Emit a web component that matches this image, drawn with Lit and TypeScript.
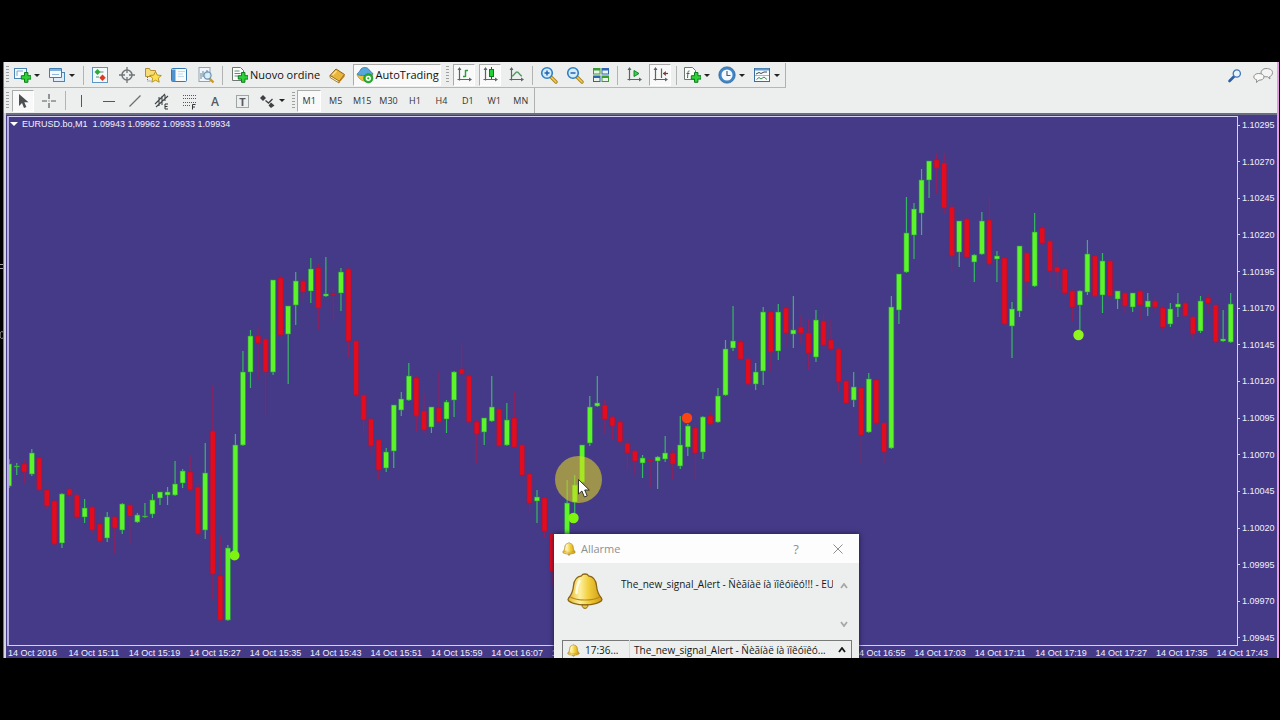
import { LitElement, html, svg, css, nothing } from "lit";
import { customElement } from "lit/decorators.js";
import { classMap } from "lit/directives/class-map.js";

type Art = ReturnType<typeof svg>;

const plus = svg`<path d="M11.500 6.500h3.400v3.200h3.200v3.400h-3.200v3.200h-3.400v-3.200H8.300v-3.400h3.200z" fill="#2fd038" stroke="#0b7d1c" stroke-width="1"/>`;
const axes = svg`<path d="M4.500 2.500v12M2.500 13.500h13" fill="none" stroke="#5d6366" stroke-width="1.200"/><path d="M4.500 1l-2 3h4zM17 13.500l-3-2v4z" fill="#5d6366"/>`;
const bell = svg`<path d="M18 2c2 0 3 .8 3.500 1.800 5 .7 7.500 4.700 8 10 .5 6 1.500 8.500 5 12.500 1.500 2-.5 3.700-5 5-7 2-16 2-23 0-4.500-1.300-6.500-3-5-5 3.500-4 4.500-6.500 5-12.500.5-5.300 3-9.300 8-10C15 2.800 16 2 18 2z" fill="url(#brass)" stroke="#8a6512" stroke-width="1.300"/><path d="M3.500 25c6 4 23 4 29 0" fill="none" stroke="#b88a16" stroke-width="1.200"/><path d="M12.500 9c-2.500 4-2.500 8-3 12" fill="none" stroke="#fffbe0" stroke-width="2.500" stroke-linecap="round"/><path d="M15 33c0 4.500 6 4.500 6 0z" fill="#e9c84b" stroke="#8a6512"/>`;
const brass = svg`<defs><linearGradient id="brass"><stop offset="0" stop-color="#e6b52a"/><stop offset=".35" stop-color="#fdf0a0"/><stop offset=".6" stop-color="#f2cf3e"/><stop offset="1" stop-color="#cf9a12"/></linearGradient></defs>`;
const lens = svg`<path d="M11 11l5 5" stroke="#a8811f" stroke-width="3.400" stroke-linecap="round"/><path d="M11 11l5 5" stroke="#f0cf5a" stroke-width="1.600" stroke-linecap="round"/><circle cx="7" cy="7" r="5.300" fill="#d5ecfb" stroke="#2f7fc4" stroke-width="1.600"/>`;

const icons: Record<string, Art> = {
  newChart: svg`<rect x="1.500" y="2.500" width="12" height="10" fill="#f4faff" stroke="#4a84b4"/><path d="M4 5v5M4 5h6" stroke="#7aa7c9" fill="none"/>${plus}`,
  profiles: svg`<rect x="5.500" y="6.500" width="11" height="9" fill="#dfeefa" stroke="#4a84b4"/><path d="M1.500 2.500h12v9h-12z" fill="#f4faff" stroke="#3f7db1"/><path d="M2 4h11" stroke="#7fb0d8" stroke-width="2"/><path d="M4 8.500h7" stroke="#8fb8d8"/>`,
  market: svg`<rect x="1.500" y="1.500" width="15" height="15" fill="#f3faff" stroke="#5b95c4"/><path d="M6.500 3l3 3-3 3-3-3z" fill="#2ea838"/><path d="M11.500 8.500l3.200 3.200-3.200 3.200-3.200-3.200z" fill="#e0391f"/><path d="M9 6h3.500M5 11h3" stroke="#57955e" stroke-width="1.200"/>`,
  target: svg`<circle cx="9" cy="9" r="5" fill="none" stroke="#70767a" stroke-width="1.500"/><path d="M9 1v6M9 11v6M1 9h6M11 9h6" stroke="#70767a" stroke-width="1.300"/>`,
  folderStar: svg`<path d="M1.500 2.500h4l1 2h5v6h-10z" fill="#f6dc77" stroke="#b5902f"/><path d="M3.500 11v4h3" fill="none" stroke="#6f6f6f" stroke-dasharray="1 1"/><path d="M11.500 5.500l1.800 3.600 4 .4-3 2.700.9 4-3.700-2-3.700 2 .9-4-3-2.700 4-.4z" fill="#ffdf4d" stroke="#b08a1e" stroke-width=".9"/>`,
  navigator: svg`<rect x="1.500" y="2.500" width="15" height="13" rx="1" fill="#f8fcff" stroke="#3478b4"/><path d="M2 3.500h3.500v12H2z" fill="#4f93cc"/><path d="M8 5.500h7M8 8h5M8 10.500h6" stroke="#bed5e8" stroke-width=".9"/>`,
  tester: svg`<rect x="2" y="1.500" width="11" height="14" fill="#f0f6fa" stroke="#8fa5b5"/><path d="M4 13v-6M6 11V5M8 12V7M10 8V4" stroke="#6b8292"/><path d="M12 12l4.500 4.500" stroke="#c99a2b" stroke-width="2.400"/><circle cx="10.500" cy="9.500" r="3.600" fill="#d7edfacc" stroke="#6a93b3" stroke-width="1.200"/>`,
  order: svg`<path d="M2.500 1.500h8l3 3v10h-11z" fill="#fbfdfb" stroke="#6d776f"/><path d="M4.500 5h5M4.500 7.500h6M4.500 10h4" stroke="#6a8a6c"/>${plus}`,
  book: svg`<path d="M2 9.500L8 3l8.500 5.500-5.500 7z" fill="#e9b63b" stroke="#8f6212"/><path d="M2 9.500v2l9 5.500v-2z" fill="#fff3cf" stroke="#8f6212" stroke-width=".8"/><path d="M11 15.500l5.500-7v2L11 17z" fill="#b77c15"/><path d="M4.500 9L8.500 5" stroke="#fbe39a" stroke-width="1.500"/>`,
  robot: svg`<path d="M1 8.500c2-1 14-1 16 0-1 3.500-3 6-6 6.500-5 1-9-3-10-6.500z" fill="#e9c13f" stroke="#b58b1e" stroke-width=".7"/><path d="M1.500 7.500C3 6 4 5 5 3c1.500-2 6-2 7.500 0 1 1.500 2 2.500 4 4 1 1.500-1 2.500-7 2.500s-9-.5-8-2z" fill="#57a7dc" stroke="#2b76ad" stroke-width=".8"/><circle cx="12.300" cy="12.300" r="4.600" fill="#22b52d" stroke="#128a1c" stroke-width=".7"/><circle cx="12.300" cy="12.300" r="1.900" fill="none" stroke="#fff" stroke-width="1.500"/>`,
  bars: svg`${axes}<path d="M10.500 4v7M10.500 4.500h2.500M8 10.500h2.500" stroke="#2c9b3c" stroke-width="1.400" fill="none"/>`,
  candles: svg`${axes}<path d="M10.500 1v12" stroke="#0d6e1c"/><rect x="8.500" y="3.500" width="4" height="7" fill="#1fd133" stroke="#0d7e1c"/>`,
  line: svg`${axes}<path d="M5 10c2 0 3-4 5-4 2 0 3 4 5 4" stroke="#5a9c64" stroke-width="1.300" fill="none"/>`,
  zoomIn: svg`${lens}<path d="M7 4.500v5M4.500 7h5" stroke="#1f65ad" stroke-width="1.500"/>`,
  zoomOut: svg`${lens}<path d="M4.500 7h5" stroke="#1f65ad" stroke-width="1.500"/>`,
  tile: svg`<path d="M1 2h7.500v6.500H1zM9.500 9.500H17V16H9.500z" fill="#3a9c2e"/><path d="M9.500 2H17v6.500H9.500zM1 9.500h7.500V16H1z" fill="#2f64b4"/><path d="M2 4.500h5.500v3H2zM10.500 4.500H16v3h-5.500zM2 12h5.500v3H2zM10.500 12H16v3h-5.500z" fill="#e9f5ea"/>`,
  scroll: svg`${axes}<path d="M9 4.500v6l5-3z" fill="#3ecb50" stroke="#128a26"/>`,
  shift: svg`${axes}<path d="M10.500 2.500v9.500" stroke="#5d6366" stroke-width="1.200"/><path d="M12 7.500h5" stroke="#7b3c34" stroke-width="1.200"/><path d="M14.800 5v5L12 7.500z" fill="#7b3c34"/>`,
  indicator: svg`<path d="M1.500 1.500h8l3 3v9h-11z" fill="#fbfdfb" stroke="#6d776f"/><path d="M6.500 5c-2-.5-1.500 2-2 7M3.500 7.500h3" fill="none" stroke="#4f5a52"/>${plus}`,
  clock: svg`<circle cx="9" cy="9" r="6.800" fill="#f3f9ff" stroke="#3f86c8" stroke-width="2.600"/><circle cx="9" cy="9" r="8.200" fill="none" stroke="#1d568f" stroke-width=".7"/><path d="M9 5v4.500h3.500" fill="none" stroke="#47617a" stroke-width="1.200"/>`,
  template: svg`<rect x="1.500" y="2.500" width="15" height="13" fill="#f8fcff" stroke="#37709f"/><path d="M2 3.500h14" stroke="#5d9bce" stroke-width="2"/><path d="M3 8l3-1.500 2 1 3-1.500h3" fill="none" stroke="#444"/><path d="M2 9.500h14" stroke="#84aac6" stroke-width=".8"/><path d="M3.500 13.500l2.500-2 2 1.500 3-2 3 2.500" fill="none" stroke="#388d43"/>`,
  search: svg`<path d="M8 9.500l-4.500 4.500" stroke="#2d5fa6" stroke-width="2.600" stroke-linecap="round"/><circle cx="10.800" cy="6.500" r="3.600" fill="#eaf4fd" stroke="#3e74b8" stroke-width="1.300"/>`,
  chat: svg`<path d="M13 1.500c4 0 6.500 1.500 6.500 4S18 9.300 16.500 9.600L17 12l-2.500-2.200C10 10 8 8.500 8 6s2-4.500 5-4.500z" fill="#f3f4f3" stroke="#8b8f8d"/><path d="M5.500 6.500c3.500 0 5.500 1.300 5.500 3.400s-2 3.300-5 3.300L3.500 15.500l.2-2.700C2 12.300.8 11.400.8 10c0-2 2-3.500 4.700-3.500z" fill="#f8f8f7" stroke="#8b8f8d"/>`,
  cursor: svg`<path d="M5 2v12l3-3 2 5 2.400-1-2.100-4.800H14.500z" fill="#4b4f52"/>`,
  cross: svg`<path d="M9 2v5M9 11v5M2 9h5M11 9h5" stroke="#53585b" stroke-width="1.200"/><path d="M8.500 9h1" stroke="#53585b"/>`,
  vline: svg`<path d="M8.500 3v12" stroke="#53585b"/>`,
  hline: svg`<path d="M3 9.500h12" stroke="#53585b"/>`,
  trend: svg`<path d="M3.500 14.500l11-11" stroke="#6a6f72" stroke-width="1.200"/>`,
  channel: svg`<path d="M2 12L12 2M3 15L15 4M6 5v9M9 4v9M12 3v6" stroke="#43474a" stroke-width="1.100"/><path d="M15 12h-3v5h3M12 14.500h2.500" fill="none" stroke="#33373a"/>`,
  fib: svg`<path d="M3 3.500h13M3 6.500h13M3 10.500h13M3 13.500h7" stroke="#53585b" stroke-dasharray="1 1" stroke-width="1.200"/><path d="M15.500 12.500h-3v5M12.500 15h2.500" fill="none" stroke="#33373a"/>`,
  textA: svg`<text x="9" y="13.500" text-anchor="middle" font-size="12" font-weight="600" font-family="Open Sans" fill="#55595c">A</text>`,
  textT: svg`<rect x="3.500" y="3.500" width="12" height="12" fill="none" stroke="#53585b" stroke-dasharray="1 1"/><text x="9.500" y="14" text-anchor="middle" font-size="11" font-weight="700" font-family="Open Sans" fill="#55595c">T</text>`,
  shapes: svg`<path d="M5 3l3 3-3 3-3-3z" fill="#3d4144"/><path d="M7.500 8.500l3 2.500 4-4" fill="none" stroke="#3d4144" stroke-width="1.300"/><path d="M13 10.500l3.500 3-3.500 2.500-2.500-2.500z" fill="#3d4144"/>`,
};

type Candle = [string, number, number, number, number];
const candles: (Candle | null)[] = [
  ["u", 459, 464, 486, 487], ["u", 463, 466, 467, 474], ["d", 459, 464, 472, 482], ["u", 449, 453, 474, 475],
  ["d", 457, 458, 490, 490], ["d", 490, 490, 506, 508], ["d", 500, 501, 544, 545], ["u", 493, 494, 543, 547],
  ["d", 488, 489, 495, 508], ["d", 493, 495, 517, 519], ["u", 499, 508, 517, 522], ["d", 505, 507, 530, 532],
  ["d", 513, 524, 541, 545], ["u", 512, 517, 538, 541], ["d", 516, 517, 528, 553], ["u", 503, 504, 530, 533],
  ["d", 504, 505, 516, 542], ["u", 513, 515, 522, 522], ["u", 503, 516, 517, 517], ["u", 494, 500, 514, 517],
  ["u", 492, 492, 498, 504], ["u", 487, 492, 495, 504], ["u", 461, 484, 495, 495], ["u", 469, 471, 483, 487],
  ["d", 455, 472, 490, 491], ["d", 483, 487, 534, 536], ["u", 443, 473, 530, 538], ["d", 385, 431, 574, 599],
  ["d", 536, 576, 620, 621], ["u", 545, 548, 620, 620], ["u", 434, 445, 552, 552], ["u", 351, 372, 445, 445],
  ["u", 330, 336, 372, 387], ["d", 327, 336, 343, 379], ["d", 337, 339, 372, 415], ["u", 280, 280, 372, 374],
  ["d", 276, 278, 335, 336], ["u", 306, 306, 334, 383], ["u", 272, 281, 305, 324], ["d", 278, 281, 292, 301],
  ["u", 258, 269, 291, 302], ["d", 264, 268, 308, 328], ["u", 257, 294, 296, 296], ["d", 288, 294, 295, 320],
  ["u", 268, 272, 293, 310], ["d", 268, 269, 341, 356], ["d", 339, 341, 395, 397], ["d", 393, 395, 420, 432],
  ["d", 417, 419, 446, 453], ["d", 439, 440, 470, 479], ["u", 448, 452, 468, 471], ["u", 405, 405, 451, 467],
  ["u", 392, 399, 410, 415], ["u", 363, 376, 400, 400], ["d", 376, 378, 416, 431], ["d", 393, 411, 430, 432],
  ["u", 407, 407, 427, 432], ["d", 372, 408, 422, 423], ["u", 400, 402, 419, 432], ["u", 371, 372, 400, 416],
  ["d", 343, 369, 374, 374], ["d", 374, 376, 422, 423], ["d", 420, 422, 434, 463], ["u", 418, 418, 432, 444],
  ["u", 376, 407, 421, 421], ["d", 408, 409, 446, 446], ["u", 403, 420, 445, 445], ["d", 391, 418, 447, 447],
  ["d", 443, 445, 475, 476], ["d", 473, 474, 503, 513], ["u", 490, 497, 501, 522], ["d", 497, 498, 531, 536],
  ["d", 534, 534, 571, 585], null, ["u", 480, 503, 580, 584], ["u", 475, 485, 502, 512],
  ["u", 445, 445, 482, 482], ["u", 396, 407, 443, 445], ["u", 376, 403, 406, 406], ["d", 399, 405, 419, 433],
  ["d", 415, 417, 426, 438], ["d", 420, 422, 442, 444], ["d", 439, 443, 453, 468], ["d", 449, 451, 461, 475],
  ["u", 455, 458, 463, 477], ["d", 459, 460, 461, 487], ["u", 456, 457, 461, 488], ["u", 436, 453, 459, 461],
  ["d", 450, 453, 464, 478], ["u", 416, 445, 466, 468], ["u", 424, 426, 447, 455], ["d", 423, 428, 453, 478],
  ["u", 416, 417, 452, 458], ["d", 412, 416, 424, 424], ["u", 388, 396, 422, 422], ["u", 340, 349, 395, 395],
  ["u", 306, 341, 348, 350], ["d", 339, 342, 359, 359], ["d", 357, 359, 384, 384], ["u", 363, 372, 384, 389],
  ["u", 307, 312, 371, 384], ["d", 311, 312, 352, 371], ["u", 304, 312, 351, 359], ["d", 306, 308, 333, 346],
  ["u", 296, 330, 334, 347], ["d", 315, 327, 333, 342], ["d", 319, 333, 353, 369], ["u", 310, 320, 357, 361],
  ["d", 314, 321, 345, 347], ["d", 320, 340, 349, 350], ["d", 348, 349, 382, 390], ["d", 379, 381, 403, 403],
  ["u", 372, 387, 400, 406], ["d", 387, 388, 435, 463], ["u", 373, 379, 432, 432], ["d", 379, 380, 423, 424],
  ["d", 422, 423, 452, 463], ["u", 296, 307, 448, 448], ["u", 274, 274, 310, 323], ["u", 197, 233, 272, 272],
  ["u", 203, 209, 235, 258], ["u", 169, 180, 213, 234], ["u", 161, 161, 180, 197], ["d", 153, 160, 168, 193],
  ["d", 153, 163, 208, 213], ["d", 204, 207, 256, 271], ["u", 221, 221, 252, 266], ["d", 218, 219, 257, 257],
  ["u", 254, 255, 262, 281], ["u", 212, 221, 254, 254], ["d", 197, 220, 264, 266], ["u", 251, 256, 259, 281],
  ["d", 257, 258, 324, 325], ["u", 302, 309, 326, 357], ["u", 246, 246, 311, 316], ["d", 252, 253, 282, 297],
  ["u", 213, 232, 286, 286], ["d", 226, 228, 243, 245], ["d", 240, 241, 271, 287], ["d", 252, 267, 272, 288],
  ["d", 268, 269, 293, 294], ["d", 289, 291, 307, 320], ["u", 290, 291, 305, 331], ["u", 240, 254, 292, 294],
  ["d", 255, 256, 296, 297], ["u", 253, 261, 295, 312], ["d", 259, 261, 296, 298], ["u", 291, 291, 299, 308],
  ["d", 292, 293, 306, 313], ["u", 293, 293, 307, 311], ["d", 290, 291, 305, 318], ["u", 293, 301, 307, 315],
  ["d", 298, 301, 307, 313], ["d", 306, 308, 327, 331], ["u", 303, 309, 324, 326], ["u", 293, 304, 307, 316],
  ["d", 300, 303, 316, 317], ["d", 315, 317, 334, 339], ["u", 296, 301, 331, 332], ["d", 294, 298, 303, 313],
  ["d", 304, 305, 342, 344], ["u", 310, 339, 341, 341], ["u", 293, 304, 342, 342],
];
const step = 7.54;

// Slots left empty lie behind the alert window.
const times = ["2016", "15:11", "15:19", "15:27", "15:35", "15:43", "15:51", "15:59", "16:07", "16:15", "",
  "", "", "", "16:55", "17:03", "17:11", "17:19", "17:27", "17:35", "17:43"];
const prices = Array.from({ length: 15 }, (_, i) => (1.10295 - i * 0.00025).toFixed(5));

@customElement("tool-bars")
export class ToolBars extends LitElement {
  static styles = css`
    :host { display: block; padding-top: 1px; background: #ecefed; color: #111; font-family: "Open Sans", sans-serif; }
    .row { display: flex; align-items: stretch; height: 25px; }
    .bar { display: flex; align-items: center; border-right: 1px solid #aeb1af; border-bottom: 1px solid #b4b7b5; }
    .row.lower .bar { border-bottom: 0; }
    .spread { display: flex; }
    .spread > button { flex: 1; margin: 0 1px; width: auto; }
    .views { width: 132px; }
    .drawing { width: 186px; }
    .frames { width: 238px; }
    button { display: flex; align-items: center; justify-content: center; box-sizing: border-box; width: 22px; height: 22px; margin: 0 2px; padding: 0; border: 1px solid transparent; background: none; color: inherit; font: 9px/12px "Open Sans", sans-serif; }
    .frames button { color: #333; }
    button.menu { width: 35px; margin: 0; justify-content: flex-start; gap: 3px; padding-left: 2px; }
    button.order { width: auto; margin: 0; padding: 0 3px; gap: 2px; font-size: 11px; }
    button.auto { width: 88px; margin: 0 0 0 3px; gap: 2px; font-size: 11px; }
    button.on, .spread > button.on { background: #f8f9f8; border-color: #a9acaa #fff #fff #a9acaa; }
    .icon { display: block; width: 18px; height: 18px; flex: none; }
    .chat { width: 20px; }
    .caret { width: 0; border: 3px solid transparent; border-top-color: #222; border-bottom: 0; }
    .sep { width: 7px; height: 19px; flex: none; background: linear-gradient(#b1b4b2, #b1b4b2) 3px 0 / 1px 100% no-repeat; }
    .grip { width: 3px; height: 18px; margin: 0 1px 0 2px; flex: none; background: repeating-linear-gradient(#9da09e 0 1px, transparent 1px 3px); }
    .grip.wide { margin: 0 2px 0 5px; }
    .tail { margin-left: auto; display: flex; align-items: center; gap: 2px; padding-right: 1px; }
  `;

  private icon(name: string, extra = "") {
    return html`<svg class="icon ${extra}" viewBox=${extra ? "0 0 20 18" : "0 0 18 18"} aria-hidden="true">${icons[name]}</svg>`;
  }

  private tool(name: string, label: string, opts: { on?: boolean; menu?: boolean } = {}) {
    return html`<button class=${classMap({ on: !!opts.on, menu: !!opts.menu })} aria-label=${label}>
      ${this.icon(name)}${opts.menu ? html`<span class="caret"></span>` : nothing}</button>`;
  }

  render() {
    const sep = html`<span class="sep"></span>`;
    const grip = html`<span class="grip"></span>`;
    return html`
      <div class="row">
        <div class="bar">
          ${grip}
          ${this.tool("newChart", "New chart", { menu: true })}${this.tool("profiles", "Profiles", { menu: true })}
          ${sep}
          <div class="spread views">
            ${this.tool("market", "Market watch")}${this.tool("target", "Data window")}${this.tool("folderStar", "Navigator")}
            ${this.tool("navigator", "Terminal")}${this.tool("tester", "Strategy tester")}
          </div>
          ${sep}
          <button class="order">${this.icon("order")}Nuovo ordine</button>
          ${this.tool("book", "MetaEditor")}
          <button class="auto on">${this.icon("robot")}AutoTrading</button>
          <span class="grip wide"></span>
          ${this.tool("bars", "Bar chart", { on: true })}${this.tool("candles", "Candlesticks", { on: true })}${this.tool("line", "Line chart")}
          ${sep}
          ${this.tool("zoomIn", "Zoom in")}${this.tool("zoomOut", "Zoom out")}${this.tool("tile", "Tile windows")}
          ${sep}
          ${this.tool("scroll", "Auto scroll")}${this.tool("shift", "Chart shift", { on: true })}
          ${sep}
          ${this.tool("indicator", "Indicators", { menu: true })}${this.tool("clock", "Periods", { menu: true })}${this.tool("template", "Templates", { menu: true })}
        </div>
        <div class="tail">
          ${this.tool("search", "Search")}
          <button aria-label="Chat">${this.icon("chat", "chat")}</button>
        </div>
      </div>
      <div class="row lower">
        <div class="bar">
          ${grip}
          ${this.tool("cursor", "Cursor", { on: true })}${this.tool("cross", "Crosshair")}
          ${sep}
          <div class="spread drawing">
            ${this.tool("vline", "Vertical line")}${this.tool("hline", "Horizontal line")}${this.tool("trend", "Trend line")}
            ${this.tool("channel", "Channel")}${this.tool("fib", "Fibonacci")}${this.tool("textA", "Text")}${this.tool("textT", "Text label")}
          </div>
          ${this.tool("shapes", "Arrows", { menu: true })}
          ${grip}
          <div class="spread frames">
            ${["M1", "M5", "M15", "M30", "H1", "H4", "D1", "W1", "MN"].map(
              (f, i) => html`<button class=${classMap({ on: i === 0 })}>${f}</button>`)}
          </div>
        </div>
      </div>`;
  }
}

@customElement("price-chart")
export class PriceChart extends LitElement {
  static styles = css`
    :host { display: grid; grid-template-columns: 1fr 39px; grid-template-rows: 1fr 12px; min-height: 0; padding: 1px 0 0 1px; background: #453a87; color: #f1effc; font: 9px/12px "Liberation Sans", sans-serif; }
    .plot { position: relative; min-height: 0; border: 1px solid #d6d0f2; border-left: 2px solid #b5aee0; }
    .drawing { display: block; width: 100%; height: 100%; position: absolute; inset: 0; }
    .title { position: relative; display: flex; align-items: center; gap: 4px; padding: 1px; white-space: pre; }
    .caret { border: 4px solid transparent; border-top-color: #fff; border-bottom: 0; }
    .prices { display: flex; flex-direction: column; justify-content: space-between; padding: 3px 0 2px; }
    .price { display: flex; align-items: center; gap: 2px; }
    .price::before { content: ""; width: 2px; height: 1px; background: #d6d0f2; }
    .times { grid-column: 1 / -1; display: grid; grid-template-columns: repeat(20, 56fr) 20fr; margin: 0 39px 0 1px; height: 12px; white-space: nowrap; }
    .time { width: 0; line-height: 15px; background: linear-gradient(#d6d0f2, #d6d0f2) 0 0 / 1px 2px no-repeat; }
    .up { fill: #5cf52a; stroke: #2f8f4a; stroke-width: .6; }
    .down { fill: #e30c1c; stroke: #a01846; stroke-width: .6; }
    .upWick { fill: #37b863; }
    .downWick { fill: #8c2260; }
  `;

  render() {
    return html`
      <div class="plot">
        <svg class="drawing" viewBox="9 117 1228 528" preserveAspectRatio="none" role="img" aria-label="EURUSD M1 candles">
          ${candles.map((c, i) => {
            if (!c) return nothing;
            const [dir, high, top, bottom, low] = c;
            const x = 9.2 + i * step;
            return svg`<rect class=${dir === "u" ? "upWick" : "downWick"} x=${x - 0.6} y=${high} width="1.2" height=${low - high + 1}/>
              <rect class=${dir === "u" ? "up" : "down"} x=${x - 2.5} y=${top} width="5" height=${Math.max(bottom - top, 1)}/>`;
          })}
          <circle cx="234.500" cy="555.500" r="5" fill="#7ff50f"/>
          <circle cx="573.500" cy="518" r="5.200" fill="#7ff50f"/>
          <circle cx="687" cy="418" r="5.200" fill="#fb4414"/>
          <circle cx="1078.500" cy="335" r="5.200" fill="#8ff51c"/>
          <circle cx="578.500" cy="479.500" r="23.500" fill="#e2da1e" opacity=".56"/>
          <path d="M578.500 479.500v14.500l3.400-3 2.500 6 2.800-1.200-2.500-5.800h4.600z" fill="#fff" stroke="#222" stroke-width=".9"/>
        </svg>
        <div class="title"><span class="caret"></span>EURUSD.bo,M1  1.09943 1.09962 1.09933 1.09934</div>
      </div>
      <div class="prices">${prices.map((p) => html`<div class="price">${p}</div>`)}</div>
      <div class="times">${times.map((t) => html`<div class="time">${t ? `14 Oct ${t}` : nothing}</div>`)}</div>`;
  }
}

@customElement("alert-dialog")
export class AlertDialog extends LitElement {
  static styles = css`
    :host { display: block; background: #ecefed; color: #16181a; font: 10px/14px "Open Sans", sans-serif; box-shadow: 0 0 5px #1c1640; }
    .head { display: flex; align-items: center; height: 29px; padding: 0 10px 0 8px; background: #fdfdfd; color: #8d9090; font-size: 11px; }
    .head h2 { margin: 0 auto 0 5px; font: inherit; }
    .head button { width: 22px; height: 22px; margin-left: 20px; padding: 0; border: 0; background: none; color: inherit; font: 13px/22px "Open Sans", sans-serif; }
    .cross, .arrow { display: block; margin: 0 auto; fill: none; stroke: currentColor; }
    .bell { display: block; flex: none; }
    .body { display: flex; height: 77px; padding-right: 7px; }
    .body .bell { margin: 9px 17px 0 12px; }
    .message { flex: 1; overflow: hidden; margin-top: 14px; white-space: nowrap; }
    .rail { display: flex; flex-direction: column; justify-content: space-between; box-sizing: border-box; width: 17px; padding: 20px 0 13px; margin-left: 2px; color: #a5a8a6; }
    table { width: calc(100% - 15px); margin: 0 8px; border-collapse: collapse; border: 1px solid #777a78; table-layout: fixed; }
    td { height: 18px; padding: 0 0 0 4px; white-space: nowrap; overflow: hidden; }
    td:first-child { width: 62px; border-right: 1px solid #d6d9d7; }
    td:last-child { width: 18px; padding: 0; }
    .stamp { display: flex; align-items: center; gap: 5px; }
  `;

  private bell(size: number) {
    return html`<svg class="bell" width=${size} height=${size} viewBox="0 0 36 38" aria-hidden="true">${brass}${bell}</svg>`;
  }

  private arrow(d: string) {
    return html`<svg class="arrow" width="8" height="6" viewBox="0 0 8 6" stroke-width="1.800"><path d=${d} /></svg>`;
  }

  render() {
    return html`
      <div class="head">
        ${this.bell(14)}
        <h2>Allarme</h2>
        <button aria-label="Help">?</button>
        <button aria-label="Close"><svg class="cross" width="10" height="10" viewBox="0 0 10 10"><path d="M.5.5l9 9M9.500.5l-9 9" /></svg></button>
      </div>
      <div class="body">
        ${this.bell(38)}
        <div class="message">The_new_signal_Alert - Ñèãíàë íà ïîêóïêó!!! - EURUSD.bo</div>
        <div class="rail">${this.arrow("M1 5l3-4 3 4")}${this.arrow("M1 1l3 4 3-4")}</div>
      </div>
      <table>
        <tr>
          <td><div class="stamp">${this.bell(13)}17:36...</div></td>
          <td>The_new_signal_Alert - Ñèãíàë íà ïîêóïêó...</td>
          <td>${this.arrow("M1 5l3-4 3 4")}</td>
        </tr>
      </table>`;
  }
}

@customElement("app-root")
export class AppRoot extends LitElement {
  static styles = css`
    :host { display: flex; box-sizing: border-box; height: 100vh; padding: 62px 1px 62px 0; background: #000; }
    .edge { flex: none; width: 3px; height: 100%; fill: none; stroke: #a9a2ad; }
    .window { position: relative; flex: 1; min-width: 0; display: flex; flex-direction: column; overflow: hidden; border-left: 1px solid #b0549c; border-right: 2px solid #e79ae0; background: #d3d3dc; }
    price-chart { flex: 1; margin-left: 2px; border-top: 2px solid #6b6d86; }
    alert-dialog { position: absolute; left: 550px; top: 472px; width: 305px; height: 140px; overflow: hidden; }
  `;

  render() {
    return html`
      <svg class="edge" aria-hidden="true"><path d="M0 202.500h3M0 206.500h3M3 270c-2-1-3 0-3 3s1 4 3 3" /></svg>
      <div class="window">
        <tool-bars></tool-bars>
        <price-chart></price-chart>
        <alert-dialog role="dialog" aria-label="Allarme"></alert-dialog>
      </div>`;
  }
}
